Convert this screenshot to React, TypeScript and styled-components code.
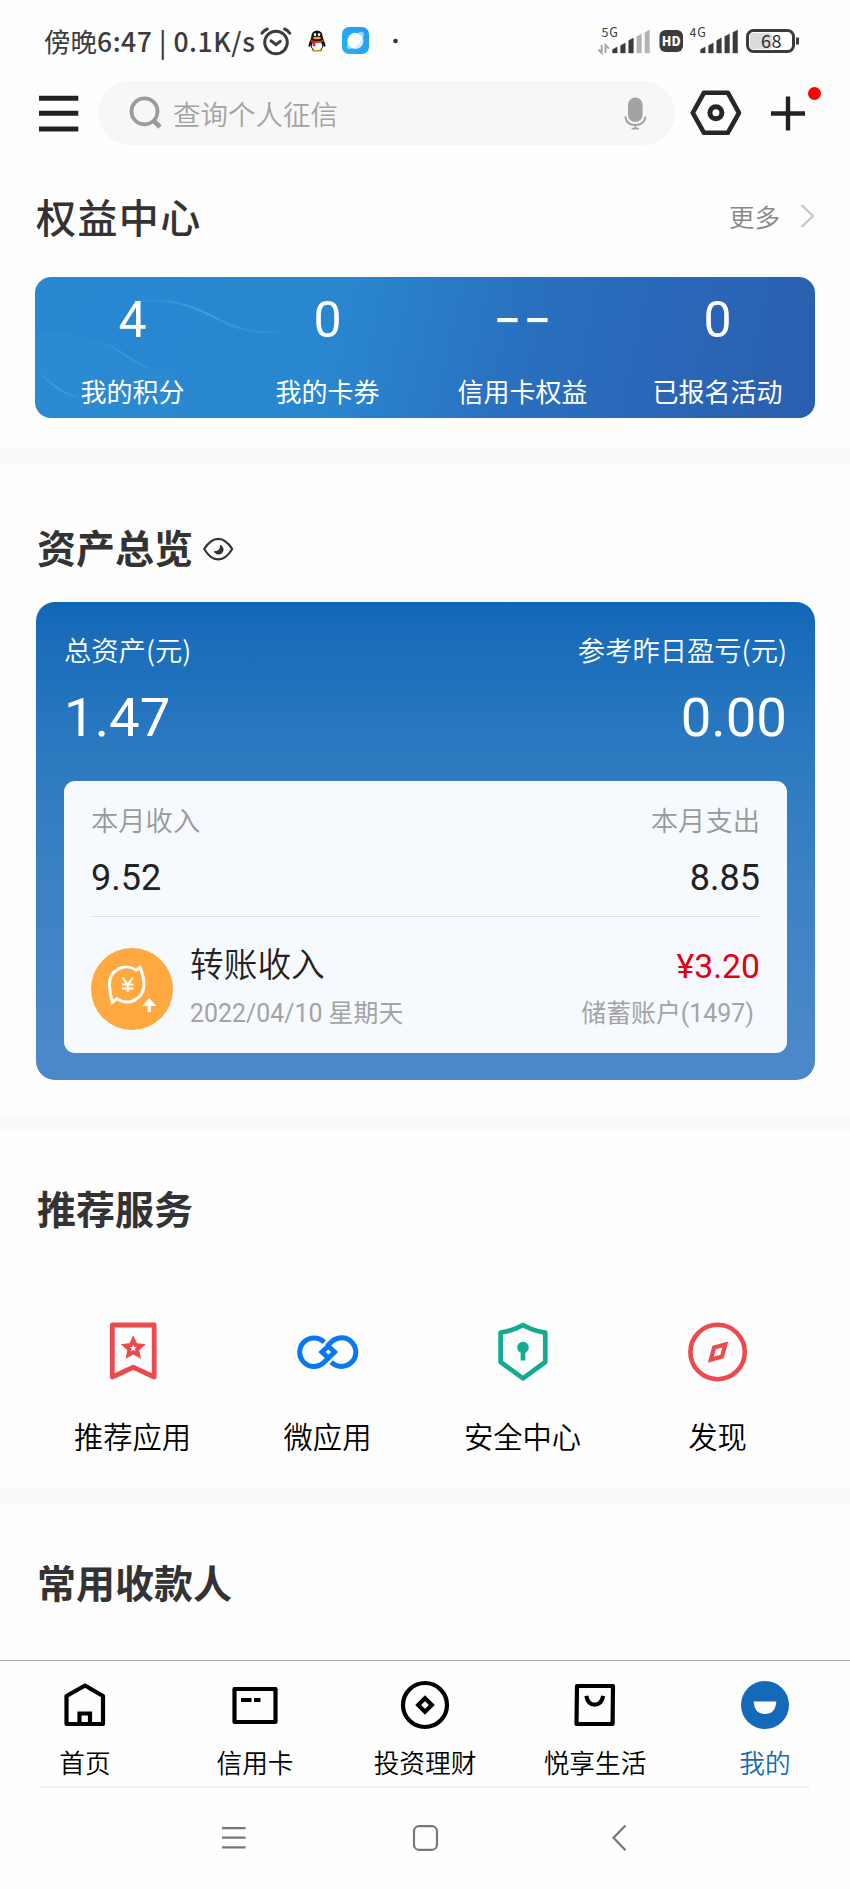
import React from "react";
import styled, { createGlobalStyle } from "styled-components";

const CJK = '"Noto Sans CJK SC", "Noto Sans", sans-serif';
const NUM = 'Roboto, "Noto Sans CJK SC", sans-serif';

const GlobalStyle = createGlobalStyle`
  * { box-sizing: border-box; }
  body { margin: 0; background: #fefefe; font-family: ${CJK}; color: #222; }
  svg { display: block; flex: none; overflow: visible; }
`;

const Page = styled.div`
  width: 850px;
  height: 1889px;
  overflow: hidden;
  display: flex;
  flex-direction: column;
  background: #fefefe;
  white-space: nowrap;
`;

/* ---------- status bar ---------- */
const StatusBar = styled.div`
  height: 81px;
  padding: 0 48px 0 44px;
  display: flex;
  align-items: center;
  flex: none;
`;
const Clock = styled.span`
  width: 215px;
  font-size: 26.5px;
  font-weight: 400;
  line-height: 40px;
  color: #3c3c3c;
`;
const ClockDigits = styled.span`
  font-weight: 500;
  letter-spacing: 0.55px;
`;
const StatusIcons = styled.div`
  display: flex;
  align-items: center;
  gap: 16.5px;
  flex: 1;
`;
const StatusRight = styled.div`
  display: flex;
  align-items: center;
`;

/* ---------- search row ---------- */
const SearchRow = styled.div`
  height: 64px;
  padding: 0 28px 0 39px;
  display: flex;
  align-items: center;
  flex: none;
`;
const SearchBox = styled.div`
  margin-left: 19px;
  width: 578px;
  height: 64px;
  border-radius: 32px;
  background: #f7f7f7;
  padding: 0 28px 0 31px;
  display: flex;
  align-items: center;
`;
const SearchHint = styled.span`
  flex: 1;
  margin-left: 11px;
  font-size: 27.5px;
  line-height: 40px;
  font-weight: 350;
  color: #a3a3a3;
`;
const HexButton = styled.div`
  margin-left: 14px;
`;
const PlusButton = styled.div`
  margin-left: 28px;
`;

/* ---------- sections ---------- */
const Band = styled.div`
  height: 16.5px;
  background: #fafafa;
  flex: none;
`;
const Section = styled.section<{ $h: number; $top: number }>`
  height: ${(p) => p.$h}px;
  padding: ${(p) => p.$top}px 35px 0 35px;
  flex: none;
`;
const SectionHead = styled.div`
  display: flex;
  align-items: center;
  height: 60px;
`;
const Title = styled.h2<{ $size?: number; $weight?: number; $space?: number }>`
  margin: 0 0 0 ${(p) => (p.$space ? 1 : 2)}px;
  font-size: ${(p) => p.$size ?? 39}px;
  font-weight: ${(p) => p.$weight ?? 700};
  letter-spacing: ${(p) => p.$space ?? 0}px;
  line-height: 60px;
  color: #333;
`;
const More = styled.span`
  margin-left: auto;
  margin-right: 20px;
  font-size: 25.5px;
  font-weight: 350;
  color: #888;
  line-height: 40px;
`;
const EyeIcon = styled.svg`
  margin-top: 7px;
`;

/* ---------- benefits card ---------- */
const BenefitCard = styled.div`
  position: relative;
  margin-top: 31px;
  height: 140.5px;
  border-radius: 16px;
  overflow: hidden;
  background: linear-gradient(102deg, #2a88d2 0%, #2987d0 38%, #2970bf 62%, #2a68b9 78%, #2a5fae 100%);
`;
const Waves = styled.svg`
  position: absolute;
  left: 0;
  top: 0;
`;
const BenefitGrid = styled.div`
  position: relative;
  display: grid;
  grid-template-columns: repeat(4, 1fr);
  padding-top: 15px;
  text-align: center;
  color: #fff;
`;
const BenefitValue = styled.div`
  height: 48px;
  font-size: 48px;
  font-weight: 500;
  line-height: 48px;
`;
const Digit = styled.span`
  font-family: ${NUM};
  font-size: 50px;
  font-weight: 400;
  line-height: 0;
`;
const Dashes = styled.span`
  display: inline-block;
  transform: translateY(-3px) scaleX(1.6);
  letter-spacing: 1.6px;
  margin-right: -1.6px;
`;
const BenefitLabel = styled.div`
  margin-top: 35.5px;
  font-size: 26px;
  line-height: 30px;
`;

/* ---------- assets card ---------- */
const AssetCard = styled.div`
  margin: 25.5px 0 0 1px;
  height: 478px;
  border-radius: 19px;
  padding: 27px 28px 0 28px;
  background: linear-gradient(180deg, #1168b7 0%, #1a6dba 8%, #2f7bc1 36%, #3c82c5 60%, #4a88c9 92%, #4a88c9 100%);
  color: #fff;
`;
const Pair = styled.div`
  display: flex;
  justify-content: space-between;
`;
const AssetLabel = styled.span`
  font-size: 27.3px;
  font-weight: 350;
  line-height: 40px;
`;
const AssetValue = styled.span`
  margin-top: 18px;
  font-family: ${NUM};
  font-size: 54.5px;
  line-height: 60px;
`;
const FlowCard = styled.div`
  margin-top: 34px;
  height: 272px;
  border-radius: 11px;
  background: #f6fafe;
  padding: 18.5px 27px 0 27px;
`;
const FlowLabel = styled.span`
  font-size: 27.3px;
  font-weight: 350;
  line-height: 40px;
  color: #999;
`;
const FlowValue = styled.span`
  margin-top: 19px;
  font-family: ${NUM};
  font-size: 36px;
  line-height: 40px;
  color: #222;
`;
const Rule = styled.div`
  margin-top: 17.5px;
  height: 1px;
  background: #d6e0e9;
`;
const Transfer = styled.div`
  display: flex;
  padding-top: 26.5px;
`;
const TransferIcon = styled.div`
  margin-top: 5px;
`;
const TransferText = styled.div<{ $right?: boolean }>`
  display: flex;
  flex-direction: column;
  margin-left: ${(p) => (p.$right ? "auto" : "17px")};
  align-items: ${(p) => (p.$right ? "flex-end" : "flex-start")};
`;
const TransferName = styled.span`
  font-size: 33.7px;
  font-weight: 350;
  line-height: 40px;
  color: #222;
`;
const TransferAmount = styled.span`
  font-family: ${NUM};
  font-size: 33.7px;
  line-height: 40px;
  padding-top: 3.5px;
  color: #e3000f;
`;
const TransferMeta = styled.span<{ $inset?: number; $top: number }>`
  margin-top: ${(p) => p.$top}px;
  margin-right: ${(p) => p.$inset ?? 0}px;
  font-family: ${NUM};
  font-size: 24.9px;
  font-weight: 400;
  line-height: 30px;
  color: #a3a3a3;
`;

/* ---------- services ---------- */
const ServiceGrid = styled.div`
  display: grid;
  grid-template-columns: repeat(4, 1fr);
  padding-top: 83px;
`;
const Service = styled.div`
  display: flex;
  flex-direction: column;
  align-items: center;
`;
const ServiceLabel = styled.span`
  margin-top: 31px;
  font-size: 29.3px;
  font-weight: 350;
  line-height: 40px;
  color: #000;
`;

/* ---------- bottom bars ---------- */
const TabBar = styled.nav`
  display: grid;
  grid-template-columns: repeat(5, 1fr);
  height: 126px;
  border-top: 1px solid #a9a9a9;
  padding-top: 19px;
  flex: none;
`;
const Tab = styled.div<{ $active?: boolean }>`
  display: flex;
  flex-direction: column;
  align-items: center;
  color: ${(p) => (p.$active ? "#146ab8" : "#000")};
`;
const TabLabel = styled.span`
  margin-top: 17px;
  font-size: 25.7px;
  font-weight: 350;
  line-height: 30px;
`;
const FootLine = styled.div`
  height: 2px;
  margin: 0 40px;
  background: #f3f3f3;
  flex: none;
`;
const SystemNav = styled.div`
  display: flex;
  align-items: center;
  height: 100px;
  padding-left: 219px;
  flex: none;
`;
const NavGap = styled.div<{ $w: number }>`
  width: ${(p) => p.$w}px;
`;

function Bars({ weak }: { weak?: boolean }) {
  const dark = "#3c3c3c";
  const pale = "#b4b4b4";
  const tops = [47, 43, 38, 34, 30];
  return (
    <>
      {tops.map((t, i) => {
        const x = 14.5 + i * 8.1;
        const tone = weak && i > 2 ? pale : dark;
        return (
          <path
            key={i}
            d={`M${x} ${t + 2.4}L${x + 4.7} ${t}V53H${x}Z`}
            fill={tone}
            stroke={tone}
            strokeWidth="0.4"
            strokeLinejoin="round"
            transform="translate(0,-20)"
          />
        );
      })}
    </>
  );
}

function Signal({ label, weak }: { label: string; weak?: boolean }) {
  return (
    <svg width="54" height="41" viewBox="0 0 54 41">
      <text x="3.5" y="17.2" fontFamily="Noto Sans CJK SC, sans-serif" fontSize="12.5" fontWeight="400" fill="#3c3c3c" letterSpacing="0.8">
        {label}
      </text>
      {weak && (
        <path d="M0.5 29.5l3.2 3.5V25M7.5 33V25l3.4 3.6" fill="none" stroke="#a8a8a8" strokeWidth="2" />
      )}
      <Bars weak={weak} />
    </svg>
  );
}

const red = "#ec4a4d";

export default function App() {
  return (
    <>
      <GlobalStyle />
      <Page>
        <StatusBar>
          <Clock>
            傍晚<ClockDigits>6:47 | 0.1K/s</ClockDigits>
          </Clock>
          <StatusIcons>
            <svg width="32" height="30" viewBox="0 0 32 30">
              <g fill="none" stroke="#3c3c3c" strokeWidth="3" strokeLinecap="round">
                <circle cx="17" cy="16.5" r="11.3" />
                <path d="M12 14.8l5 3.8 4.2-3.2M3 7.2Q5 4.3 8.3 3M30.8 7.2Q29 4.3 25.6 3" />
              </g>
            </svg>
            <svg width="18" height="22" viewBox="0 0 18 22">
              <path d="M3.2 7Q3.6 0.5 9 0.5T14.8 7Q15.2 9 16 11Q18.4 15.4 16.9 17Q16 16.8 15.4 15.8Q15 18 13.6 19.2Q15 20.6 13.5 21.3H4.6Q3 20.6 4.4 19.2Q3 18 2.6 15.8Q2 16.8 1.1 17Q-0.4 15.4 2 11Q2.9 9 3.2 7Z" fill="#151515" />
              <ellipse cx="9" cy="15.8" rx="5.3" ry="4.8" fill="#fff" />
              <ellipse cx="7" cy="4.6" rx="1.2" ry="1.7" fill="#fff" />
              <ellipse cx="11" cy="4.6" rx="1.2" ry="1.7" fill="#fff" />
              <ellipse cx="9" cy="8" rx="4" ry="1.3" fill="#f3a61c" />
              <path d="M2.8 9.5Q9 13 15.2 9.5L15.6 11.6Q11.5 13.3 7.3 12.8V16.2H4.7V12.4L2.5 11.5Z" fill="#e5202b" />
              <path d="M4 20.6Q6.5 19.3 8.4 20.9M9.6 20.9Q11.5 19.3 14 20.6" stroke="#f3a61c" strokeWidth="1.2" fill="none" />
            </svg>
            <svg width="27" height="27" viewBox="0 0 27 27">
              <defs>
                <linearGradient id="app" x1="1" y1="0" x2="0" y2="1">
                  <stop offset="0" stopColor="#2b98f0" />
                  <stop offset="1" stopColor="#1fb4fa" />
                </linearGradient>
              </defs>
              <rect width="27" height="27" rx="7" fill="url(#app)" />
              <path d="M16.5 5.5Q20 4.2 21.6 5.6Q22.6 7.4 21 11Z" fill="#9bd8fb" />
              <path d="M5.6 16Q4.4 20 5.6 21.4Q7.4 22.6 11 21.2Z" fill="#9bd8fb" />
              <circle cx="13.4" cy="13.8" r="8" fill="#fff" />
              <path d="M20.4 10.2Q22 14.5 18.9 19.2Q15.8 22.2 11.4 21.4Q17.6 17.6 20.4 10.2Z" fill="#d3edfd" />
            </svg>
            <svg width="20" height="6" viewBox="0 0 20 6">
              <circle cx="9.5" cy="3" r="2.3" fill="#333" />
            </svg>
          </StatusIcons>
          <StatusRight>
            <Signal label="5G" weak />
            <svg width="34" height="24" viewBox="0 0 34 24">
              <rect x="7.5" y="1" width="23.5" height="22" rx="6" fill="#3c3c3c" />
              <text x="19.2" y="16.5" textAnchor="middle" fontFamily="Noto Sans CJK SC, sans-serif" fontSize="12.5" fontWeight="900" fill="#fff">HD</text>
            </svg>
            <Signal label="4G" />
            <svg width="62" height="26" viewBox="0 0 62 26">
              <rect x="10" y="5" width="22" height="16" rx="3" fill="#dcdcdc" />
              <rect x="7.5" y="2.5" width="46" height="21" rx="6" fill="none" stroke="#3c3c3c" strokeWidth="3" />
              <path d="M57.5 9.5V16.5" stroke="#3c3c3c" strokeWidth="3" />
              <text x="31.5" y="19.6" textAnchor="middle" fontFamily="Noto Sans CJK SC, sans-serif" fontSize="18" fontWeight="400" fill="#2c2c2c" letterSpacing="0.5">68</text>
            </svg>
          </StatusRight>
        </StatusBar>

        <SearchRow>
          <svg width="40" height="38" viewBox="0 0 40 38">
            <path d="M0 4.2H39.3M0 19.2H39.3M0 35H39.3" stroke="#222" strokeWidth="5" />
          </svg>
          <SearchBox>
            <svg width="33" height="34" viewBox="0 0 33 34">
              <circle cx="15.5" cy="15.3" r="13" fill="none" stroke="#9b9b9b" strokeWidth="3.8" />
              <path d="M24.5 24.5L31 31" stroke="#9b9b9b" strokeWidth="4.6" />
            </svg>
            <SearchHint>查询个人征信</SearchHint>
            <svg width="23" height="33" viewBox="0 0 23 33">
              <rect x="4" y="0.5" width="14.6" height="24.6" rx="7.3" fill="#a3a3a3" />
              <path d="M1.2 19.5Q2.4 28 11.3 28T21.6 19.5M11.3 28V31.8M7.6 31.6H15" fill="none" stroke="#a3a3a3" strokeWidth="1.9" />
            </svg>
          </SearchBox>
          <HexButton>
            <svg width="54" height="48" viewBox="0 0 54 48">
              <path d="M15 3.7H38.8L50 23.9L38.8 43.8H15L3.8 23.9Z" fill="none" stroke="#272727" strokeWidth="4.6" strokeLinejoin="round" />
              <circle cx="26.9" cy="23.8" r="6" fill="none" stroke="#272727" strokeWidth="5" />
            </svg>
          </HexButton>
          <PlusButton>
            <svg width="51" height="64" viewBox="0 0 51 64">
              <path d="M0 32.5H34M17 15.5V49.5" stroke="#222" strokeWidth="4.4" />
              <circle cx="43.5" cy="12.5" r="6.5" fill="#f80404" />
            </svg>
          </PlusButton>
        </SearchRow>

        <Section $h={303} $top={41}>
          <SectionHead>
            <Title $size={40} $weight={500} $space={1.4}>权益中心</Title>
            <More>更多</More>
            <svg width="15" height="24" viewBox="0 0 15 24">
              <path d="M1.5 1L13 12L1.5 23" fill="none" stroke="#c6c6c6" strokeWidth="2.2" />
            </svg>
          </SectionHead>
          <BenefitCard>
            <Waves width="780" height="141" viewBox="0 0 780 141" fill="none">
              <defs>
                <linearGradient id="crest" x1="0" y1="0" x2="1" y2="0">
                  <stop offset="0" stopColor="#4fa9ea" stopOpacity="0" />
                  <stop offset="0.5" stopColor="#4fa9ea" stopOpacity="0.6" />
                  <stop offset="1" stopColor="#4fa9ea" stopOpacity="0.1" />
                </linearGradient>
              </defs>
              <path d="M0 54C45 52 80 68 100 82C115 92 125 93 140 94V141H0Z" fill="#4aa6e6" fillOpacity="0.07" />
              <path d="M90 26C135 18 160 30 185 43C205 54 225 57 250 55" stroke="url(#crest)" strokeWidth="2.2" />
              <path d="M60 63C85 68 100 92 125 93" stroke="url(#crest)" strokeOpacity="0.7" strokeWidth="2" />
              <path d="M0 94C15 102 20 115 45 121" stroke="url(#crest)" strokeWidth="2" />
            </Waves>
            <BenefitGrid>
              <div>
                <BenefitValue><Digit>4</Digit></BenefitValue>
                <BenefitLabel>我的积分</BenefitLabel>
              </div>
              <div>
                <BenefitValue><Digit>0</Digit></BenefitValue>
                <BenefitLabel>我的卡券</BenefitLabel>
              </div>
              <div>
                <BenefitValue><Dashes>--</Dashes></BenefitValue>
                <BenefitLabel>信用卡权益</BenefitLabel>
              </div>
              <div>
                <BenefitValue><Digit>0</Digit></BenefitValue>
                <BenefitLabel>已报名活动</BenefitLabel>
              </div>
            </BenefitGrid>
          </BenefitCard>
        </Section>
        <Band />

        <Section $h={649} $top={51.5}>
          <SectionHead>
            <Title>资产总览</Title>
            <EyeIcon width="50" height="30" viewBox="-10 -1 50 30">
              <path d="M1.2 13Q7.5 2.8 15.2 2.8T29.2 13Q23 23.4 15.2 23.4T1.2 13Z" fill="none" stroke="#333" strokeWidth="2.2" />
              <path d="M17 8.8A5 5 0 1 1 10.8 15.2Q17.4 15.4 17 8.8Z" fill="#333" />
            </EyeIcon>
          </SectionHead>
          <AssetCard>
            <Pair>
              <AssetLabel>总资产(元)</AssetLabel>
              <AssetLabel>参考昨日盈亏(元)</AssetLabel>
            </Pair>
            <Pair>
              <AssetValue>1.47</AssetValue>
              <AssetValue>0.00</AssetValue>
            </Pair>
            <FlowCard>
              <Pair>
                <FlowLabel>本月收入</FlowLabel>
                <FlowLabel>本月支出</FlowLabel>
              </Pair>
              <Pair>
                <FlowValue>9.52</FlowValue>
                <FlowValue>8.85</FlowValue>
              </Pair>
              <Rule />
              <Transfer>
                <TransferIcon>
                  <svg width="82" height="82" viewBox="0 0 82 82">
                    <circle cx="41" cy="41" r="41" fill="#ffa940" />
                    <g fill="none" stroke="#fff" strokeWidth="3">
                      <path d="M46 22.8A17 17 0 0 0 18.4 37Q19 46 21.3 54.3L26 50.6A17 17 0 0 0 53 37Q53.4 30 48.9 19.2L45 22.3" strokeLinejoin="miter" />
                      <path d="M31.5 29.5L36.7 36.5L42 29.5M36.7 36V44M31 36.5H42.5M31 40.6H42.5" strokeWidth="2" />
                      <path d="M58.3 52V64" strokeWidth="3.4" />
                    </g>
                    <path d="M51.5 58L58.3 50L65.3 58Z" fill="#fff" />
                  </svg>
                </TransferIcon>
                <TransferText>
                  <TransferName>转账收入</TransferName>
                  <TransferMeta $top={15.5}>2022/04/10 星期天</TransferMeta>
                </TransferText>
                <TransferText $right>
                  <TransferAmount>¥3.20</TransferAmount>
                  <TransferMeta $top={12} $inset={6}>储蓄账户(1497)</TransferMeta>
                </TransferText>
              </Transfer>
            </FlowCard>
          </AssetCard>
        </Section>
        <Band />

        <Section $h={357} $top={47}>
          <Title>推荐服务</Title>
          <ServiceGrid>
            <Service>
              <svg width="64" height="64" viewBox="0 0 64 64" fill="none" stroke={red} strokeWidth="4.8" strokeLinejoin="round">
                <path d="M11.3 5H53.2V57L32.3 47.3L11.3 57Z" />
                <path d="M32.3 20L34.7 25.1L40.2 25.7L36.1 29.5L37.2 35L32.3 32.3L27.4 35L28.5 29.5L24.4 25.7L29.9 25.1Z" strokeWidth="4" strokeLinejoin="miter" />
              </svg>
              <ServiceLabel>推荐应用</ServiceLabel>
            </Service>
            <Service>
              <svg width="64" height="64" viewBox="0 0 64 64" fill="none" stroke="#0b78f2" strokeWidth="5">
                <path d="M28.2 22.2A14.3 14.3 0 1 0 27.5 42.9L38.6 32L32.3 26.2L26 32L32.3 37.8" strokeWidth="5" />
                <path d="M31 26L36.5 21A14.3 14.3 0 1 1 35.2 42" />
              </svg>
              <ServiceLabel>微应用</ServiceLabel>
            </Service>
            <Service>
              <svg width="64" height="64" viewBox="0 0 64 64" fill="none" stroke="#14ab91" strokeWidth="4.7" strokeLinejoin="round">
                <path d="M32 5Q42 10.8 54.3 12.6V42L32 58.3L9.6 42V12.6Q22 10.8 32 5Z" />
                <circle cx="32" cy="27.5" r="5.8" fill="#14ab91" stroke="none" />
                <path d="M32 30V40.5" />
              </svg>
              <ServiceLabel>安全中心</ServiceLabel>
            </Service>
            <Service>
              <svg width="64" height="64" viewBox="0 0 64 64" fill="none" stroke={red} strokeWidth="4.6">
                <circle cx="31.6" cy="32" r="27.2" />
                <path d="M28.1 27.5L39.3 24.5L36 36.6L24.8 39.7Z" strokeWidth="4.2" />
              </svg>
              <ServiceLabel>发现</ServiceLabel>
            </Service>
          </ServiceGrid>
        </Section>
        <Band />

        <Section $h={156} $top={47}>
          <Title>常用收款人</Title>
        </Section>

        <TabBar>
          <Tab>
            <svg width="50" height="50" viewBox="0 0 50 50" fill="none" stroke="#000" strokeWidth="4.2">
              <path d="M6.5 44V16L25 5.5L43 16V44Z" strokeLinejoin="round" />
              <path d="M19.5 44V33.5H30V44" />
            </svg>
            <TabLabel>首页</TabLabel>
          </Tab>
          <Tab>
            <svg width="50" height="50" viewBox="0 0 50 50" fill="none" stroke="#000" strokeWidth="4.2">
              <rect x="4.5" y="9" width="41" height="33" strokeLinejoin="round" />
              <path d="M11 20H21.5M24 20H30.5" />
            </svg>
            <TabLabel>信用卡</TabLabel>
          </Tab>
          <Tab>
            <svg width="50" height="50" viewBox="0 0 50 50" fill="none" stroke="#000" strokeWidth="4.2">
              <circle cx="25" cy="25" r="22" />
              <path d="M25 18.2L31.8 25L25 31.8L18.2 25Z" />
            </svg>
            <TabLabel>投资理财</TabLabel>
          </Tab>
          <Tab>
            <svg width="50" height="50" viewBox="0 0 50 50" fill="none" stroke="#000" strokeWidth="4.2">
              <path d="M7 6H43L42.6 44H6.5Z" strokeLinejoin="round" />
              <path d="M16.3 15.8Q18 24.6 24.7 24.6T33.2 15.8" />
            </svg>
            <TabLabel>悦享生活</TabLabel>
          </Tab>
          <Tab $active>
            <svg width="50" height="50" viewBox="0 0 50 50">
              <circle cx="25" cy="25" r="24" fill="#146ab8" />
              <path d="M13.5 21.5H36.3Q35.5 34 25 34T13.5 21.5Z" fill="#fff" />
            </svg>
            <TabLabel>我的</TabLabel>
          </Tab>
        </TabBar>
        <FootLine />
        <SystemNav>
          <svg width="30" height="30" viewBox="0 0 30 30">
            <path d="M3 5.2H26.6M3 14.7H26.6M3 24.3H26.6" stroke="#777" strokeWidth="2.2" />
          </svg>
          <NavGap $w={161} />
          <svg width="30" height="30" viewBox="0 0 30 30">
            <rect x="4" y="3.2" width="23" height="23.6" rx="5" fill="none" stroke="#777" strokeWidth="2.2" />
          </svg>
          <NavGap $w={166} />
          <svg width="30" height="30" viewBox="0 0 30 30">
            <path d="M19.5 2.5L7.5 14.8L19.5 27.2" fill="none" stroke="#777" strokeWidth="2.2" />
          </svg>
        </SystemNav>
      </Page>
    </>
  );
}
